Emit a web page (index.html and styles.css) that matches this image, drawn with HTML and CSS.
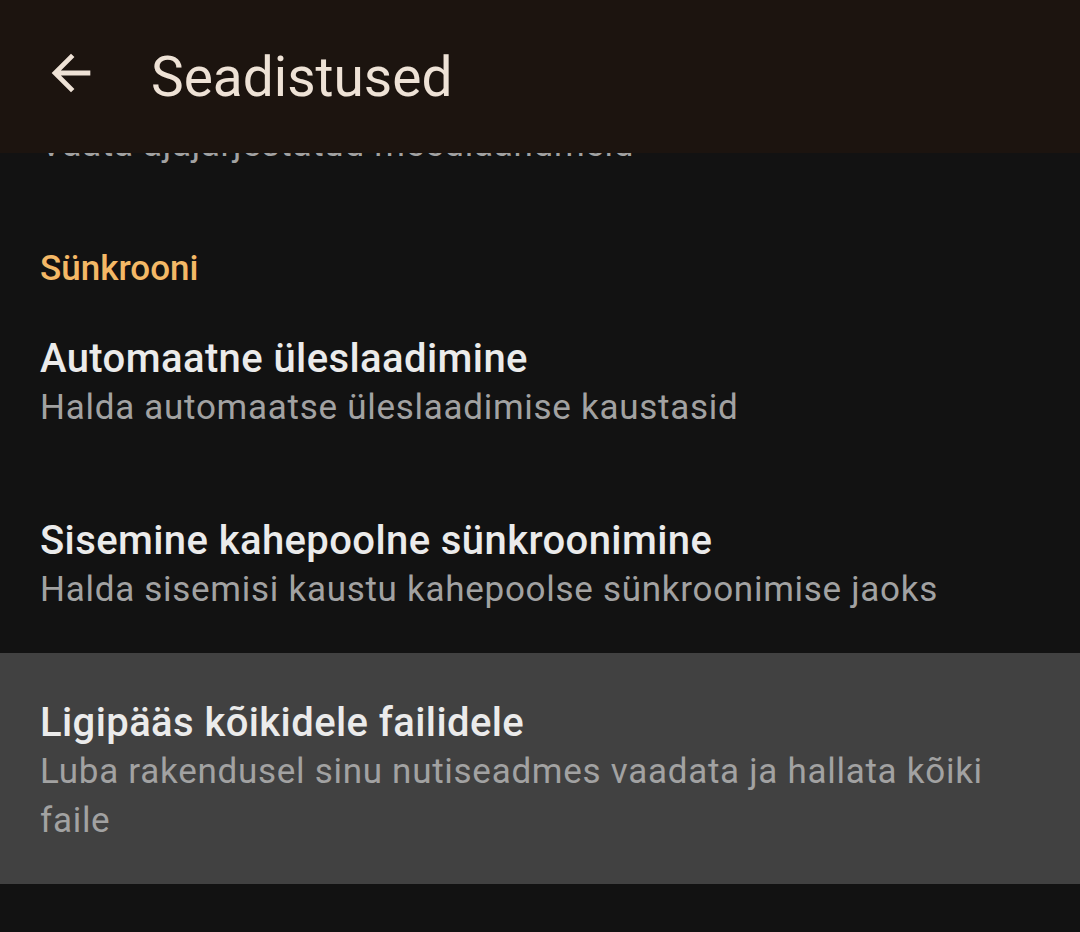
FILE: index.html
```html
<!DOCTYPE html>
<html lang="et">

<head>
    <meta charset="UTF-8">
    <meta name="viewport" content="width=device-width, initial-scale=1.0">
    <title>Seadistused</title>
    <link rel="stylesheet" href="styles.css">
</head>

<body>
    <div class="app-bar">
        <svg class="back-icon" viewBox="0 0 24 24">
            <path d="M20 11H7.83l5.59-5.59L12 4l-8 8 8 8 1.41-1.41L7.83 13H20v-2z" />
        </svg>
        <h1 class="app-title">Seadistused</h1>
    </div>

    <div class="list">
        <div class="list-inner">
            <!-- scrolled item, mostly hidden under the app bar -->
            <div class="pref">
                <div class="pref-title">Meediavaade</div>
                <div class="pref-summary">Vaata ajajärjestatud meediaandmeid</div>
            </div>

            <div class="category">Sünkrooni</div>

            <div class="pref">
                <div class="pref-title">Automaatne üleslaadimine</div>
                <div class="pref-summary">Halda automaatse üleslaadimise kaustasid</div>
            </div>

            <div class="pref">
                <div class="pref-title">Sisemine kahepoolne sünkroonimine</div>
                <div class="pref-summary">Halda sisemisi kaustu kahepoolse sünkroonimise jaoks</div>
            </div>

            <div class="pref pressed">
                <div class="pref-title">Ligipääs kõikidele failidele</div>
                <div class="pref-summary">Luba rakendusel sinu nutiseadmes vaadata ja hallata kõiki faile</div>
            </div>
        </div>
    </div>
</body>

</html>
```

FILE: styles.css
```css
html,
body {
    margin: 0;
    height: 100%;
}

body {
    background-color: #121212;
    font-family: Roboto, "Noto Sans", sans-serif;
    overflow: hidden;
    display: flex;
    flex-direction: column;
}

.app-bar {
    height: 153px;
    flex-shrink: 0;
    background-color: #1c140f;
    display: flex;
    align-items: center;
    padding-left: 42px;
    position: relative;
    z-index: 1;
}

.back-icon {
    width: 58px;
    height: 58px;
    fill: #eee2d6;
    margin-bottom: 8px;
}

.app-title {
    margin: 0 0 0 51px;
    font-size: 55px;
    font-weight: 400;
    color: #eee2d6;
}

.list {
    flex: 1;
    overflow: hidden;
}

/* fake scroll offset */
.list-inner {
    margin-top: -127px;
}

.category {
    padding: 41px 40px 0;
    line-height: 40px;
    font-size: 35px;
    font-weight: 500;
    color: #f4b866;
}

.pref {
    padding: 46px 40px 39px;
}

.pref.pressed {
    background-color: #414141;
}

.pref-title {
    font-size: 40px;
    line-height: 48px;
    font-weight: 500;
    letter-spacing: 0.4px;
    color: #ebebeb;
}

.pref-summary {
    font-size: 35px;
    line-height: 49px;
    color: #a2a2a2;
    letter-spacing: 0.72px;
}
```
